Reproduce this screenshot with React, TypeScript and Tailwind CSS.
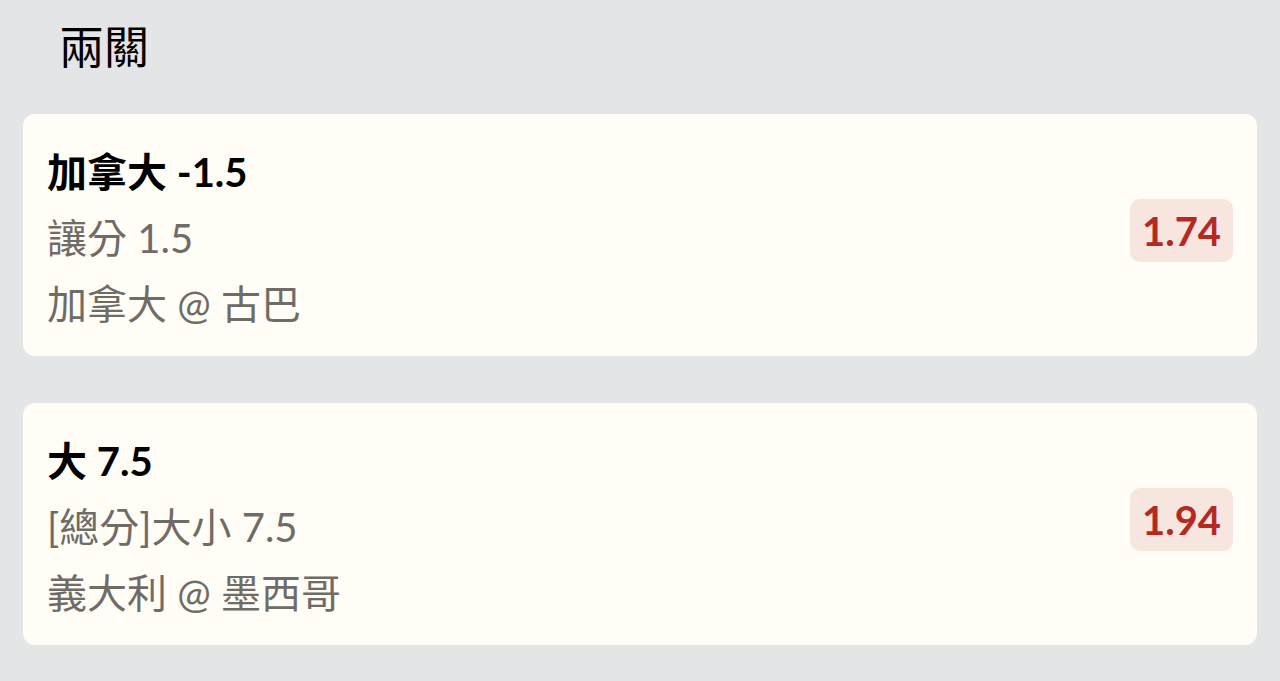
const font = "font-['Lato','Noto_Sans_CJK_TC',sans-serif]";

type Leg = { pick: string; market: string; match: string; odds: string };

const legs: Leg[] = [
  { pick: "加拿大 -1.5", market: "讓分 1.5", match: "加拿大 @ 古巴", odds: "1.74" },
  { pick: "大 7.5", market: "[總分]大小 7.5", match: "義大利 @ 墨西哥", odds: "1.94" },
];

export default function App() {
  return (
    <div className={`min-h-[681px] bg-[#e4e5e7] px-[23px] ${font}`}>
      <h1 className="pl-[36px] pt-[17px] text-[45px] leading-[60px] font-normal text-black">兩關</h1>
      <div className="mt-[37px] flex flex-col gap-[47px]">
        {legs.map((leg) => (
          <div
            key={leg.pick}
            className="flex items-center justify-between rounded-[12px] bg-[#fffdf5] pb-[19px] pl-[24px] pr-[24px] pt-[25px]"
          >
            <div className="flex flex-col text-[40px] leading-[66px]">
              <span className="font-bold text-black">{leg.pick}</span>
              <span className="text-[#6f6c68]">{leg.market}</span>
              <span className="text-[#6f6c68]">{leg.match}</span>
            </div>
            <div className="-mt-[15px] flex h-[63px] w-[103px] items-center justify-center rounded-[10px] bg-[#f6e6df] text-[40px] font-bold text-[#b42a22]">
              {leg.odds}
            </div>
          </div>
        ))}
      </div>
    </div>
  );
}
